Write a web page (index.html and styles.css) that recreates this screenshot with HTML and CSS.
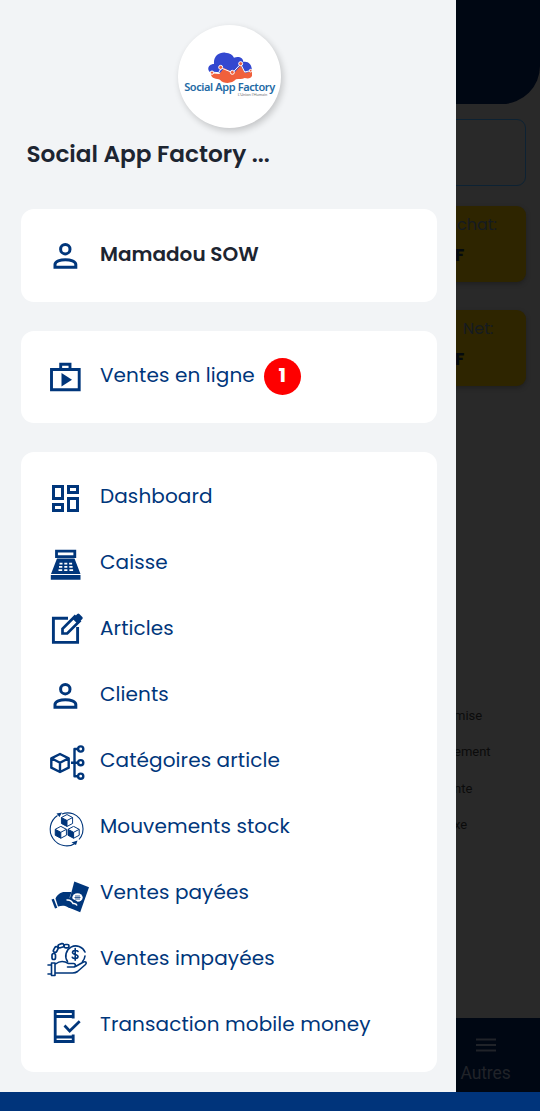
FILE: index.html
```html
<!DOCTYPE html>
<html lang="fr">
<head>
<meta charset="utf-8">
<title>Social App Factory</title>
<link rel="stylesheet" href="styles.css">
</head>
<body>
<svg width="0" height="0" class="defs">
  <defs>
    <symbol id="person" viewBox="0 0 44 44"><g fill="none" stroke="currentColor" stroke-width="3"><circle cx="22.3" cy="16.200" r="4.7"/><path d="M12 34.200v-2.600c0-3.400 5.500-4.900 10.400-4.900s10.400 1.500 10.400 4.900v2.600z"/></g></symbol>
    <symbol id="cube" viewBox="-10 -10 20 20"><path d="M0-9 8.500-4.500v9L0 9l-8.500-4.500v-9z" fill="#fff"/><path d="M-8.500-4.500 0 0v9l-8.500-4.500z" fill="currentColor"/><path d="M0-9 8.500-4.500v9L0 9l-8.500-4.500v-9zM-8.500-4.500 0 0l8.500-4.500M0 0v9" fill="none" stroke="currentColor" stroke-width="1.500" stroke-linejoin="round"/></symbol>
  </defs>
</svg>
<div class="screen">
  <aside class="drawer">
    <div class="logo">
      <svg class="cloud" viewBox="0 0 132 93" width="44" height="31">
        <path d="M8 62C-6 52 2 36 18 36 16 12 34 0 52 2 66 3 74 8 78 17c14-6 28 0 28 13 16-4 30 12 24 32z" fill="#3348d0"/>
        <path d="M8 64l26 2 14-18 30 15 20-22 14 22 20-5c4 18-6 24-22 20-8 4-18 2-26 4-12 14-38 14-48 1-10-4-26 0-28-19z" fill="#f0603c"/>
        <path d="M6 60l26 2 8-14 34 14 24-26 12 24 18-4" fill="none" stroke="#fff" stroke-width="3"/>
        <g fill="#f0603c" stroke="#fff" stroke-width="3"><circle cx="38" cy="46" r="6"/><circle cx="73" cy="61" r="6"/><circle cx="98" cy="35" r="6"/><circle cx="12" cy="62" r="5"/><circle cx="128" cy="56" r="4"/></g>
      </svg>
      <div class="logo-name">Social App Factory</div>
      <div class="logo-tag">L'Union l'Humain</div>
    </div>
    <h1 class="company">Social App Factory ...</h1>

    <section class="card user">
      <div class="row"><svg class="icon"><use href="#person"/></svg><span class="label strong">Mamadou SOW</span></div>
    </section>

    <section class="card online">
      <div class="row">
        <svg class="icon" viewBox="0 0 44 44"><path d="M8.500 15.500h27.700v20.300H8.500zM17.700 15.500v-5.300h9.300v5.300" fill="none" stroke="currentColor" stroke-width="2.900"/><path d="M18.500 19v13.500L29 25.700z" fill="currentColor"/></svg>
        <span class="label">Ventes en ligne</span><span class="badge">1</span>
      </div>
    </section>

    <nav class="card menu">
      <a class="row"><svg class="icon" viewBox="0 0 44 44"><path d="M10.500 11.500h9v12h-9zM10.500 29.500h9v6h-9zM25.500 11.500h9v6h-9zM25.500 23.500h9v12h-9z" fill="none" stroke="currentColor" stroke-width="3"/></svg><span class="label">Dashboard</span></a>
      <a class="row"><svg class="icon" viewBox="0 0 44 44"><path d="M13.500 10.200h18.300v5.500H13.500z" fill="none" stroke="currentColor" stroke-width="2.800"/><path d="M14 17.500h17.500l6 15.500H8zM7.800 34h29.700v4.700H7.800z" fill="currentColor"/><path d="M16.500 22.700h3m1.800 0h3m1.800 0h3M16 25.900h3.300m2 0h3m2 0h3.300M15.500 29.100h3.700m2 0h3.200m2 0h3.700" stroke="#fff" stroke-width="1.800"/></svg><span class="label">Caisse</span></a>
      <a class="row"><svg class="icon" viewBox="0 0 44 44"><path d="M25 11.200H10.400v24.200h24.200V20" fill="none" stroke="currentColor" stroke-width="2.900"/><path d="M19.500 26.500v-4.700L31.800 9.500l4.700 4.700L24.200 26.500z" fill="none" stroke="currentColor" stroke-width="2.700"/><path d="M29.500 11.800 34.300 7q1-1 2 0l3 3q1 1 0 2l-4.800 4.800z" fill="currentColor"/></svg><span class="label">Articles</span></a>
      <a class="row"><svg class="icon"><use href="#person"/></svg><span class="label">Clients</span></a>
      <a class="row"><svg class="icon" viewBox="0 0 44 44"><g fill="none" stroke="currentColor" stroke-width="2.400" stroke-linejoin="round"><path d="M17 15l8.700 4.300v9.400L17 33l-8.700-4.300v-9.400zM8.300 19.300 17 23.700l8.700-4.400M17 23.700V33"/><path d="M35 10h-3.500v27.200H35M28 23.700h7"/><circle cx="37.700" cy="10" r="2.600"/><circle cx="37.700" cy="23.700" r="2.600"/><circle cx="37.700" cy="37.200" r="2.600"/></g></svg><span class="label">Catégoires article</span></a>
      <a class="row"><svg class="icon" viewBox="0 0 44 44"><g fill="none" stroke="currentColor" stroke-width="1.100"><path d="M14.500 10.500A16.300 16.300 0 0 0 33 38M19 9a16.300 16.300 0 0 1 11-.2A16.300 16.300 0 0 1 36 34.500"/></g><path d="M19 7.500l-5.500 1 3 3.500zM34.500 35.500l-6 2 4.500 2.500z" fill="currentColor"/><use href="#cube" x="17.400" y="8.900" width="13.200" height="13.200"/><use href="#cube" x="11.200" y="20.700" width="13.200" height="13.200"/><use href="#cube" x="24" y="20.700" width="13.200" height="13.200"/></svg><span class="label">Mouvements stock</span></a>
      <a class="row"><svg class="icon" viewBox="0 0 44 44"><path d="M31.300 10.500 46 16.300 37.200 41.300 24.500 36z" fill="currentColor"/><ellipse cx="34.500" cy="26.500" rx="5.200" ry="4.300" fill="#fff"/><path d="M31.500 26.500h6M32 25h5M32 28h5" stroke="currentColor" stroke-width=".8"/><path d="M12.500 27.500c2-4.500 6-7 10-6.500h6l-2 5.500 6.500 3c2 1 2.500 3.500 1.500 6-3 2.200-7 2.200-10 .5-3-1.800-6-1.500-9.500-.5z" fill="currentColor"/><path d="M23.500 29c3-.5 5 .5 6.500 3.500 2-.3 3.500.3 4 2" fill="none" stroke="#fff" stroke-width="1.500"/><path d="M8.500 28.500l2.300-.7 3.500 9-2.300.8z" fill="currentColor"/></svg><span class="label">Ventes payées</span></a>
      <a class="row"><svg class="icon" viewBox="0 0 44 44"><g fill="none" stroke="currentColor" stroke-width="1.600" stroke-linecap="round" stroke-linejoin="round"><path d="M24.500 24.500A10 10 0 1 1 42 15M42 19a10 10 0 0 1-2.500 5.500"/><path d="M12.500 27c5-4 9-3 13-.5h5c2.500 0 2.500 3.500 0 3.500h-6M32.500 29.500l8-4.500c2.500-1 3.500.8 2 2.500l-8 7q-2 1.500-5 1.500H12.500M8.500 26h3.500v12.500H8.500zM5 28h3.500M5 37h3.500"/><g stroke-width="1.700"><rect x="9" y="16.500" width="3.500" height="6" rx="1.700"/><rect x="11" y="9.500" width="3.500" height="6" rx="1.700" transform="rotate(28 12.700 12.500)"/><rect x="15" y="7" width="6" height="3.500" rx="1.700" transform="rotate(-18 18 8.700)"/><rect x="21" y="7.500" width="5" height="3.300" rx="1.600"/></g><path d="M35 14.500c-1-1.500-5.500-1.300-5.500 1 0 2.500 5.500 1.500 5.500 4 0 2.300-4.500 2.700-5.700.8M32.200 11.500v11.800"/></g></svg><span class="label">Ventes impayées</span></a>
      <a class="row"><svg class="icon" viewBox="0 0 44 44"><path d="M30.200 15.500V8.500H12.200v30h18v-7M12 13.500h18M12 34h18" fill="none" stroke="currentColor" stroke-width="2.800"/><path d="M21.500 22.500l5.200 5.500 10-9.700" fill="none" stroke="currentColor" stroke-width="2.700"/></svg><span class="label">Transaction mobile money</span></a>
    </nav>
  </aside>

  <main class="behind">
    <div class="hero"></div>
    <div class="field"></div>
    <div class="stat"><span class="stat-name">chat:</span><b class="stat-value">F</b></div>
    <div class="stat"><span class="stat-name second">Net:</span><b class="stat-value">F</b></div>
    <ul class="legend"><li>mise</li><li>ement</li><li>nte</li><li>xe</li></ul>
    <div class="tab"><svg width="20" height="14" viewBox="0 0 20 14"><path d="M0 1.500h20M0 7h20M0 12.500h20" stroke="currentColor" stroke-width="2"/></svg><span>Autres</span></div>
  </main>
  <footer class="system-bar"></footer>
</div>
</body>
</html>
```
FILE: styles.css
```css
* { box-sizing: border-box; }
body { margin: 0; }
.defs { position: absolute; }

.screen {
  display: grid;
  grid-template: 1092px 19px / 456px 84px;
  width: 540px;
  height: 1111px;
  overflow: hidden;
  font-family: Poppins, Inter, "Open Sans", sans-serif;
}

.drawer { background: #f2f4f6; padding: 25px 19px 0 21px; }

.logo {
  width: 103px;
  height: 103px;
  margin-left: 157px;
  padding-top: 27px;
  border-radius: 50%;
  background: #fff;
  box-shadow: 2px 3px 7px rgba(0, 0, 0, .2);
  display: flex;
  flex-direction: column;
  align-items: center;
}
.cloud { width: 44px; height: 31px; flex: none; }
.logo-name {
  font: 600 11px/12px "Noto Sans", sans-serif;
  letter-spacing: -.4px;
  margin-top: -2px;
  color: #236aa5;
  white-space: nowrap;
}
.logo-tag { font: 4px/4px Lato, sans-serif; color: #777; margin-left: 46px; }

.company {
  margin: 10px 0 0 5.500px;
  height: 32px;
  font-size: 23.200px;
  line-height: 32px;
  font-weight: 600;
  color: #1d2531;
  white-space: nowrap;
}

.card { background: #fff; border-radius: 13px; color: #00367b; }
.user { margin-top: 39px; height: 93px; padding-top: 13px; }
.online { margin-top: 29px; height: 92px; padding-top: 12px; }
.menu { margin-top: 29px; height: 620px; padding-top: 12px; }

.row { display: flex; align-items: center; height: 66px; padding-left: 22px; }
.icon { width: 44px; height: 44px; flex: none; overflow: visible; }
.label {
  margin: -2px 0 0 13px;
  font-size: 20px;
  line-height: 30px;
  font-weight: 400;
  letter-spacing: .1px;
  white-space: nowrap;
}
.strong { font-weight: 600; letter-spacing: 0; color: #1d2531; }

.badge {
  width: 37px;
  height: 37px;
  margin: 1px 0 0 9px;
  border-radius: 50%;
  background: #fe0000;
  color: #fff;
  font-size: 20px;
  font-weight: 700;
  line-height: 35px;
  text-align: center;
}

.behind { background: #292929; overflow: hidden; color: #0b0b0b; display: flex; flex-direction: column; }
.hero { height: 104px; flex: none; background: #000713; border-bottom-right-radius: 38px; }
.field { height: 67px; flex: none; margin: 15px 14px 20px -10px; border: 1px solid #0d2233; border-radius: 9px; }
.stat {
  height: 76px;
  flex: none;
  margin: 0 14px 28px -10px;
  padding: 7px 0 0 10px;
  border-radius: 9px;
  background: #2e2500;
  box-shadow: 0 2px 5px rgba(0, 0, 0, .25);
}
.stat-name { display: block; margin-left: 1px; font-size: 16px; line-height: 24px; color: #151b20; }
.stat-name.second { margin-left: 7px; }
.stat-value { display: block; margin: 5px 0 0 -1px; font-size: 17px; line-height: 26px; color: #050a0e; }
.legend { list-style: none; margin: 284px 0 0 -2px; padding: 0; font: 13px/36.300px Roboto, sans-serif; }
.tab {
  margin-top: auto;
  height: 74px;
  padding: 20px 25px 0 0;
  display: flex;
  flex-direction: column;
  align-items: center;
  gap: 7px;
  background: #000713;
  color: #202329;
  font: 17.500px/28px Roboto, sans-serif;
}
.tab span { letter-spacing: -.1px; }

.system-bar { grid-column: 1 / -1; background: #00347b; }
```
